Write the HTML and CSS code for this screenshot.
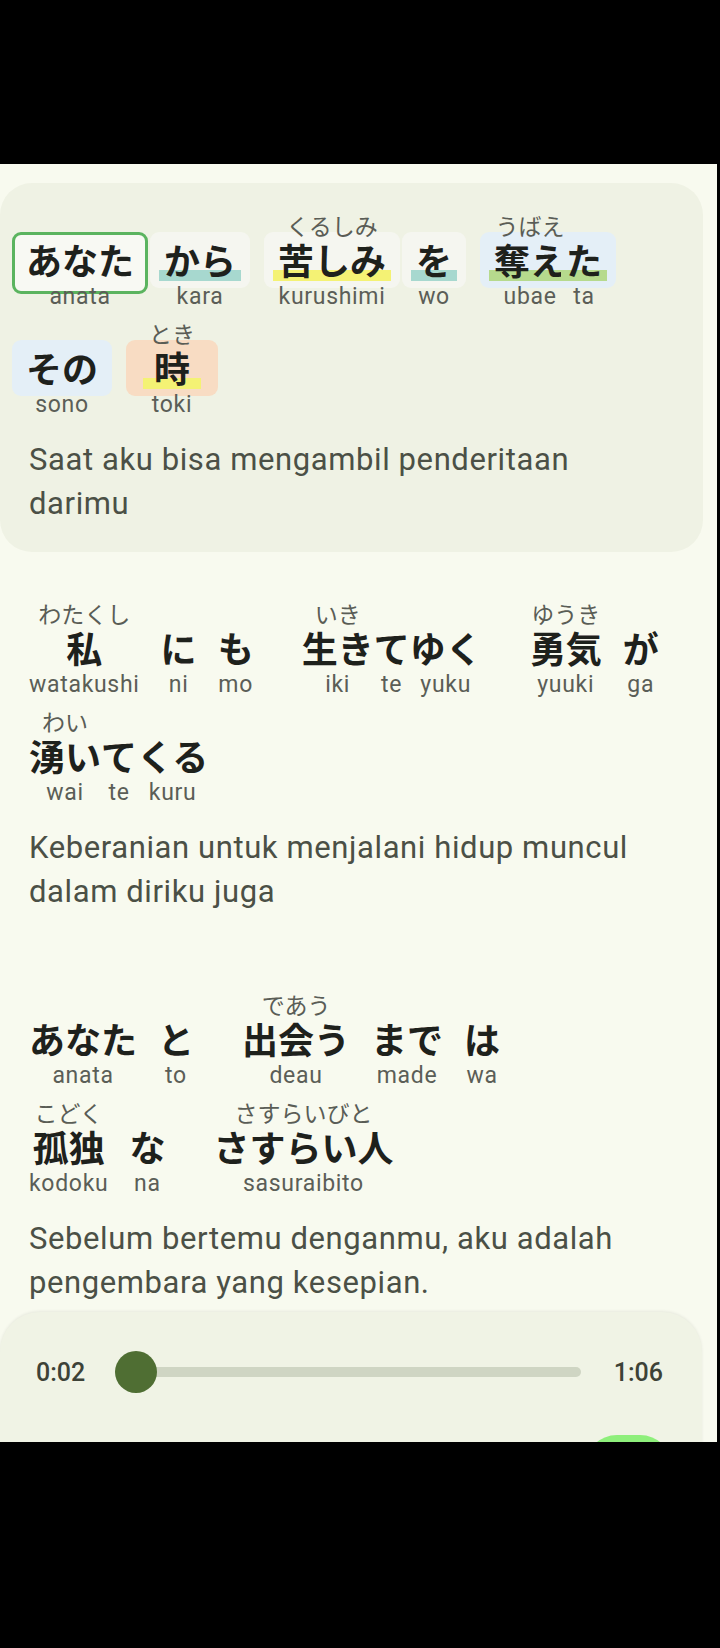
FILE: index.html
```html
<!DOCTYPE html>
<html lang="ja">
<head>
<meta charset="utf-8">
<title>Lyrics</title>
<link rel="stylesheet" href="styles.css">
</head>
<body>
<div class="screen">
  <div class="lyrics">
    <section class="verse verse--active">
      <div class="lines">
        <div class="line">
          <div class="group">
            <div class="token chip chip--selected">
              <div class="seg"><span class="furi"></span><span class="kj">あなた</span><span class="ro">anata</span></div>
            </div>
            <div class="token chip chip--plain">
              <div class="seg"><span class="furi"></span><span class="kj hl hl--teal">から</span><span class="ro">kara</span></div>
            </div>
          </div>
          <div class="group">
            <div class="token chip chip--plain">
              <div class="seg"><span class="furi">くるしみ</span><span class="kj hl hl--yellow">苦しみ</span><span class="ro">kurushimi</span></div>
            </div>
            <div class="token chip chip--plain">
              <div class="seg"><span class="furi"></span><span class="kj hl hl--teal">を</span><span class="ro">wo</span></div>
            </div>
          </div>
          <div class="group">
            <div class="token chip chip--blue">
              <div class="seg"><span class="furi">うばえ</span><span class="kj hl hl--green">奪え</span><span class="ro">ubae</span></div>
              <div class="seg"><span class="furi"></span><span class="kj hl hl--green">た</span><span class="ro">ta</span></div>
            </div>
          </div>
        </div>
        <div class="line">
          <div class="group">
            <div class="token chip chip--blue">
              <div class="seg"><span class="furi"></span><span class="kj">その</span><span class="ro">sono</span></div>
            </div>
          </div>
          <div class="group">
            <div class="token chip chip--peach chip--wide">
              <div class="seg"><span class="furi">とき</span><span class="kj hl hl--yellow hl--wide">時</span><span class="ro">toki</span></div>
            </div>
          </div>
        </div>
      </div>
      <p class="translation">Saat aku bisa mengambil penderitaan darimu</p>
    </section>

    <section class="verse">
      <div class="lines">
        <div class="line">
          <div class="group">
            <div class="token">
              <div class="seg"><span class="furi">わたくし</span><span class="kj">私</span><span class="ro">watakushi</span></div>
            </div>
            <div class="token">
              <div class="seg"><span class="furi"></span><span class="kj">に</span><span class="ro">ni</span></div>
            </div>
            <div class="token">
              <div class="seg"><span class="furi"></span><span class="kj">も</span><span class="ro">mo</span></div>
            </div>
          </div>
          <div class="group">
            <div class="token">
              <div class="seg"><span class="furi">いき</span><span class="kj">生き</span><span class="ro">iki</span></div>
              <div class="seg"><span class="furi"></span><span class="kj">て</span><span class="ro">te</span></div>
              <div class="seg"><span class="furi"></span><span class="kj">ゆく</span><span class="ro">yuku</span></div>
            </div>
          </div>
          <div class="group">
            <div class="token">
              <div class="seg"><span class="furi">ゆうき</span><span class="kj">勇気</span><span class="ro">yuuki</span></div>
            </div>
            <div class="token">
              <div class="seg"><span class="furi"></span><span class="kj">が</span><span class="ro">ga</span></div>
            </div>
          </div>
        </div>
        <div class="line">
          <div class="group">
            <div class="token">
              <div class="seg"><span class="furi">わい</span><span class="kj">湧い</span><span class="ro">wai</span></div>
              <div class="seg"><span class="furi"></span><span class="kj">て</span><span class="ro">te</span></div>
              <div class="seg"><span class="furi"></span><span class="kj">くる</span><span class="ro">kuru</span></div>
            </div>
          </div>
        </div>
      </div>
      <p class="translation">Keberanian untuk menjalani hidup muncul dalam diriku juga</p>
    </section>

    <section class="verse">
      <div class="lines">
        <div class="line">
          <div class="group">
            <div class="token">
              <div class="seg"><span class="furi"></span><span class="kj">あなた</span><span class="ro">anata</span></div>
            </div>
            <div class="token">
              <div class="seg"><span class="furi"></span><span class="kj">と</span><span class="ro">to</span></div>
            </div>
          </div>
          <div class="group">
            <div class="token">
              <div class="seg"><span class="furi">であう</span><span class="kj">出会う</span><span class="ro">deau</span></div>
            </div>
            <div class="token">
              <div class="seg"><span class="furi"></span><span class="kj">まで</span><span class="ro">made</span></div>
            </div>
            <div class="token">
              <div class="seg"><span class="furi"></span><span class="kj">は</span><span class="ro">wa</span></div>
            </div>
          </div>
        </div>
        <div class="line">
          <div class="group">
            <div class="token">
              <div class="seg"><span class="furi">こどく</span><span class="kj">孤独</span><span class="ro">kodoku</span></div>
            </div>
            <div class="token">
              <div class="seg"><span class="furi"></span><span class="kj">な</span><span class="ro">na</span></div>
            </div>
          </div>
          <div class="group">
            <div class="token">
              <div class="seg"><span class="furi">さすらいびと</span><span class="kj">さすらい人</span><span class="ro">sasuraibito</span></div>
            </div>
          </div>
        </div>
      </div>
      <p class="translation">Sebelum bertemu denganmu, aku adalah pengembara yang kesepian.</p>
    </section>
  </div>

  <div class="player">
    <div class="progress">
      <span class="time">0:02</span>
      <div class="slider">
        <div class="track"></div>
        <div class="thumb"></div>
      </div>
      <span class="time">1:06</span>
    </div>
    <div class="controls">
      <div class="play"></div>
    </div>
  </div>
</div>
</body>
</html>
```

FILE: styles.css
```css
* { box-sizing: border-box; }

html, body {
  margin: 0;
  padding: 0;
}

body {
  width: 720px;
  height: 1648px;
  overflow: hidden;
  background: #000;
  font-family: Roboto, "Noto Sans", sans-serif;
}

.screen {
  margin-top: 164px;
  width: 717px;
  height: 1278px;
  background: #f8faef;
  overflow: hidden;
}

.lyrics {
  height: 1148px;
  overflow: hidden;
  padding-top: 19px;
  display: flex;
  flex-direction: column;
  gap: 22px;
}

.verse {
  flex-shrink: 0;
  width: 703px;
  padding: 35px 0 26px;
  border-radius: 32px;
}

.verse--active {
  background: #eff2e4;
  margin-bottom: -3px;
}

.lines {
  display: flex;
  flex-direction: column;
  gap: 20px;
  padding-left: 20px;
}

.verse--active .lines {
  padding-left: 12px;
}

.line {
  display: flex;
  align-items: flex-start;
  gap: 30px;
}

.verse--active .line {
  gap: 14px;
}

.group {
  display: flex;
  gap: 3px;
}

.verse--active .group {
  gap: 2px;
}

.token {
  display: flex;
  padding: 0 9px;
  position: relative;
  isolation: isolate;
}

.chip {
  padding: 0 14px;
}

.chip--wide {
  padding: 0 23px;
}

.chip::before {
  content: "";
  position: absolute;
  left: 0;
  right: 0;
  top: 14px;
  height: 56px;
  border-radius: 9px;
  background: var(--chip, #f4f6ee);
  z-index: -1;
}

.chip--plain { --chip: #f5f6f0; }
.chip--blue { --chip: #e4eff7; }
.chip--peach { --chip: #f8dcc3; }

.chip--selected::before {
  background: #f8f9f3;
  border: 3px solid #5bb45f;
}

.seg {
  display: flex;
  flex-direction: column;
  align-items: center;
}

.furi {
  height: 14px;
  line-height: 14px;
  font-family: "Noto Sans CJK JP", sans-serif;
  font-size: 23px;
  font-weight: 400;
  color: #5a5d56;
  white-space: nowrap;
}

.kj {
  height: 44px;
  margin: 5px 0 7px;
  line-height: 44px;
  font-family: "Noto Sans CJK JP", sans-serif;
  font-size: 36px;
  font-weight: 700;
  color: #1e211c;
  white-space: nowrap;
}

.hl {
  padding: 0 5px;
  margin-left: -5px;
  margin-right: -5px;
  background: linear-gradient(var(--hl), var(--hl)) left bottom / 100% 11px no-repeat;
}

.hl--wide {
  padding: 0 11px;
  margin-left: -11px;
  margin-right: -11px;
}

.hl--teal { --hl: #a7d8cf; }
.hl--yellow { --hl: #f4f274; }
.hl--green { --hl: #b6da8d; }

.ro {
  height: 18px;
  line-height: 18px;
  font-family: Roboto, sans-serif;
  font-size: 23px;
  letter-spacing: 0.7px;
  color: #5b5e57;
  white-space: nowrap;
}

.translation {
  margin: 24px 0 0;
  padding: 0 43px 0 29px;
  font-family: Roboto, sans-serif;
  font-size: 31px;
  line-height: 44px;
  letter-spacing: 0.6px;
  color: #4b5046;
}

.player {
  width: 702px;
  height: 200px;
  padding: 39px 39px 0 36px;
  background: #f0f3e5;
  border-radius: 40px 40px 0 0;
  box-shadow: 0 -1px 3px rgba(0, 0, 0, 0.07);
}

.progress {
  display: flex;
  align-items: center;
  height: 42px;
}

.time {
  font-family: Roboto, sans-serif;
  font-size: 25px;
  font-weight: 500;
  color: #3d4237;
}

.slider {
  flex: 1;
  position: relative;
  height: 42px;
  margin: 0 33px 0 30px;
  display: flex;
  align-items: center;
}

.track {
  width: 100%;
  height: 10px;
  border-radius: 5px;
  background: #cfd5c3;
}

.thumb {
  position: absolute;
  left: 0;
  top: 0;
  width: 42px;
  height: 42px;
  border-radius: 50%;
  background: #4f6e33;
}

.controls {
  display: flex;
  justify-content: flex-end;
  margin-top: 42px;
  margin-right: -9px;
}

.play {
  width: 87px;
  height: 64px;
  border-radius: 32px;
  background: #8eef7b;
}
```
